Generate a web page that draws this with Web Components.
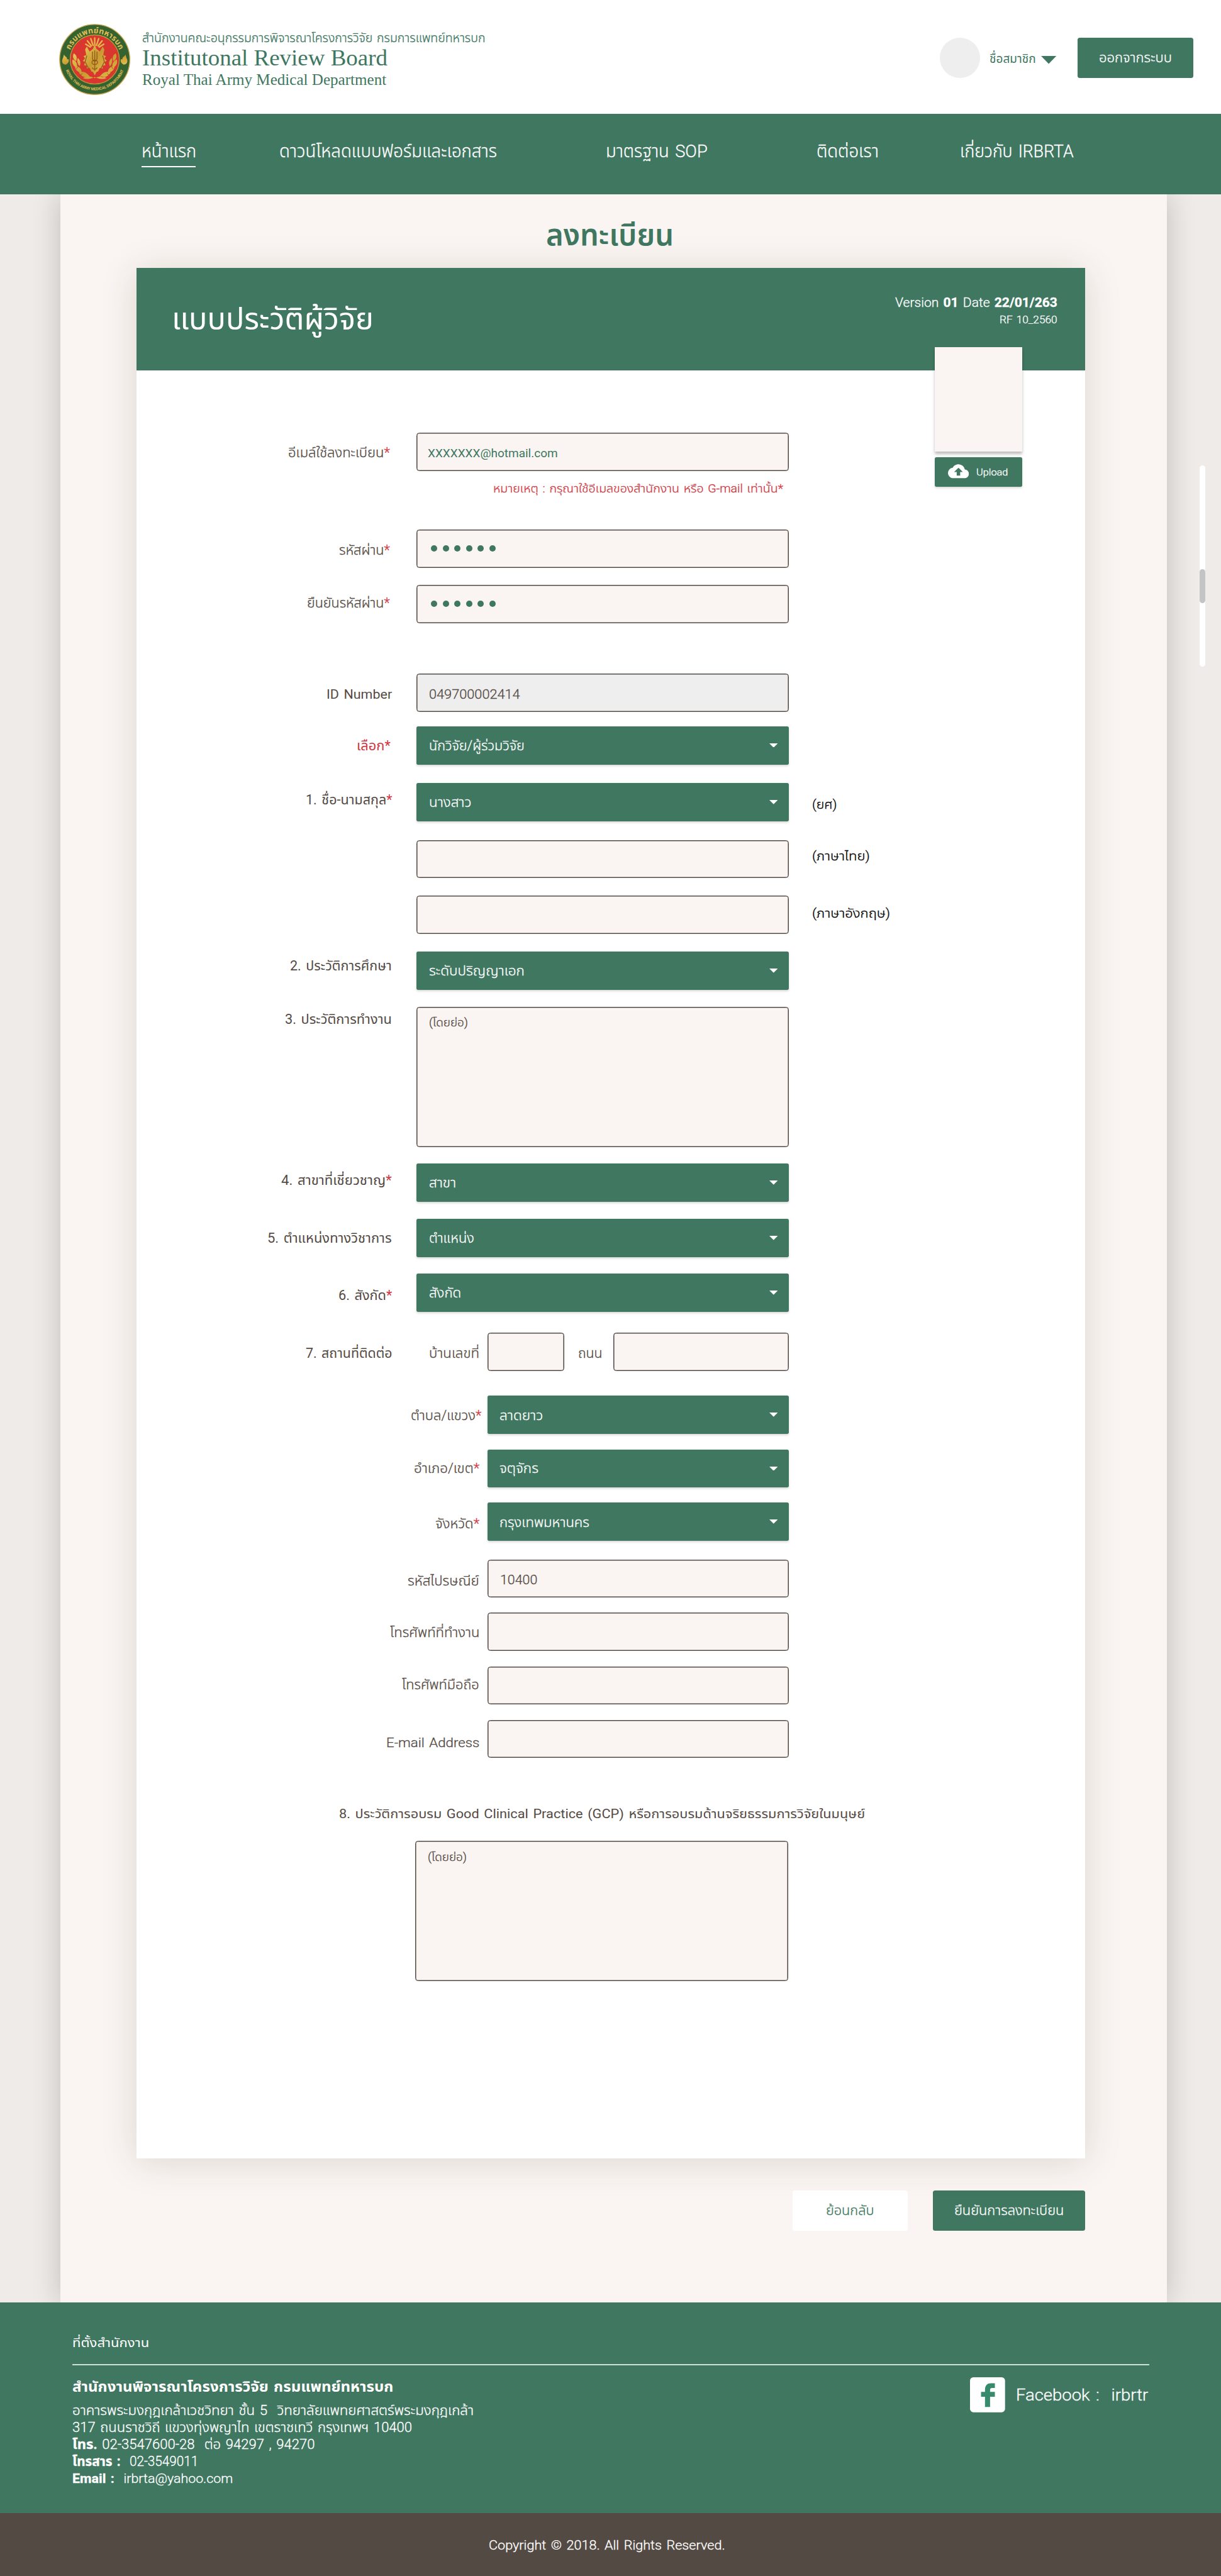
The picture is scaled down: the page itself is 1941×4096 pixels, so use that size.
<!DOCTYPE html>
<html lang="th">
<head>
<meta charset="utf-8">
<title>Institutonal Review Board</title>
<style>
html{overflow:hidden;background:#544a44;height:100%}
body{margin:0;font-family:Roboto,"Noto Sans Thai","Noto Sans",sans-serif;color:#544a44;height:4096px;width:1941px;overflow:hidden}
</style>
</head>
<body>
<irb-app></irb-app>
<script>
const BASE = `*{box-sizing:border-box}.red{color:#d23640}`;
const define = (name, css, html, after) => customElements.define(name, class extends HTMLElement {
  connectedCallback() {
    if (this.shadowRoot) return;
    const root = this.attachShadow({mode: 'open'});
    root.innerHTML = `<style>${BASE}${css}</style>${typeof html === 'function' ? html(this) : html}`;
    if (after) after(this, root);
  }
});

/* One line of text: its box ends on the baseline (b = box height), and it is fitted to w. */
define('fit-text', `
  :host{display:flex;align-items:flex-end;flex:none;white-space:pre}
  span{display:block;line-height:0;flex:none;transform-origin:0 50%}
  :host([wt="300"]) span{-webkit-text-stroke:.35px currentColor}`,
  '<span><slot></slot></span>',
  (el, root) => {
    const text = el.textContent, thai = /[\u0e00-\u0e7f]/.test(text) && !/[A-Za-z]/.test(text);
    const fs = (+el.getAttribute('fs') || 22.5) * (thai ? 1.05 : 1), w = +el.getAttribute('w');
    const span = root.querySelector('span');
    el.style.width = w + 'px';
    el.style.height = el.getAttribute('b') + 'px';
    span.style.fontSize = fs + 'px';
    span.style.marginBottom = fs * .3418 + 'px';
    if (!el.classList.contains('serif')) span.style.wordSpacing = '.1em';
    if (el.hasAttribute('wt')) span.style.fontWeight = el.getAttribute('wt');
    const ratio = el.getBoundingClientRect().width / span.getBoundingClientRect().width;
    span.style.transform = `scaleX(${ratio})`;
  });

define('irb-emblem', `:host{display:block;width:126px;height:126px}svg{display:block}`, `
<svg width="126" height="126" viewBox="0 0 126 126">
 <defs>
  <path id="top" d="M16.500 63a46.500 46.500 0 0 1 93 0"/>
  <path id="bot" d="M8.500 63a54.500 54.500 0 0 0 109 0"/>
  <linearGradient id="g" x1="0" y1="0" x2="1" y2="1"><stop offset="0" stop-color="#e9c85a"/><stop offset=".5" stop-color="#c99a30"/><stop offset="1" stop-color="#e2bd4e"/></linearGradient>
 </defs>
 <circle cx="63" cy="63" r="62" fill="#35632f" stroke="#c3a24a" stroke-width="1.600"/>
 <circle cx="63" cy="63" r="43.500" fill="#d93630" stroke="#b99a3c" stroke-width="1.500"/>
 <g fill="#e0bd55" font-family="Roboto,'Noto Sans Thai','Noto Sans',sans-serif" font-weight="700">
  <text font-size="14"><textPath href="#top" startOffset="50%" text-anchor="middle" textLength="112">กรมแพทย์ทหารบก</textPath></text>
  <text font-size="6.800"><textPath href="#bot" startOffset="50%" text-anchor="middle" textLength="132">ROYAL THAI ARMY MEDICAL DEPARTMENT</textPath></text>
 </g>
 <g fill="url(#g)">
  <g stroke="#e3b84a" stroke-width="2.600" stroke-linecap="round">
   <path d="M63 38V25M60 38l-4-12M66 38l4-12M57 39l-7-9M69 39l7-9M55 41l-8-5M71 41l8-5" fill="none"/>
  </g>
  <path d="M63 36l3 8 6 5 5-9 3 5-2 10 5 2-3 4 4 4-4 3 2 5-5 1 0 5-5-1-3 6-3 1-3 6-3-6-3-1-3-6-5 1 0-5-5-1 2-5-4-3 4-4-3-4 5-2-2-10 3-5 5 9 6-5z"/>
  <path d="M26 52c6 4 6 9 4 14-5-3-7-8-4-14zM100 52c-6 4-6 9-4 14 5-3 7-8 4-14zM24 63c7 3 9 9 7 15-6-3-9-9-7-15zM102 63c-7 3-9 9-7 15 6-3 9-9 7-15zM28 74c8 1 12 6 12 13-8-2-12-6-12-13zM98 74c-8 1-12 6-12 13 8-2 12-6 12-13zM35 86c8-3 14 0 19 7-7 3-14 1-19-7zM91 86c-8-3-14 0-19 7 7 3 14 1 19-7zM33 60c5 5 6 10 3 15-4-5-5-10-3-15zM93 60c-5 5-6 10-3 15 4-5 5-10 3-15zM42 96c8-5 14-3 21 0 7-3 13-5 21 0-8 3-14 1-21-2-7 3-13 5-21 2z"/>
  <path d="M9 54c0 4 6 4 5 9 4-3 5 6-2 9-6 0-8-5-6-10 2-3 1-5 3-8zM117 54c0 4-6 4-5 9-4-3-5 6 2 9 6 0 8-5 6-10-2-3-1-5-3-8z"/>
 </g>
 <path d="M59 49v12a4 5 0 0 0 8 0V49M63 47v36M58 68a5 4 0 1 0 10 0 5 4 0 1 0-10 0M59 77a4 3 0 1 0 8 0M49 56l-3 11 6 12M77 56l3 11-6 12" fill="none" stroke="#8f5b1c" stroke-width="1.500"/>
 <path d="M36 92l5-4M30 80l5-6M90 92l-5-4M96 80l-5-6" stroke="#8f5b1c" stroke-width="1"/>
</svg>`);

define('irb-button', `
  :host{display:flex;justify-content:center;align-items:flex-start;flex:none;background:#407761;color:#fff;border-radius:4px;height:71px}
  :host([light]){background:#fff;color:#407761}`, '<slot></slot>');

define('irb-header', `
  :host{display:flex;height:201px;background:#fff;color:#407761;padding-left:105px;align-items:flex-start}
  irb-emblem{margin-top:42px}
  .names{margin-left:21px;flex:1}
  .serif{font-family:"Liberation Serif",serif}
  .avatar{width:71px;height:71px;border-radius:50%;background:#eee;margin:67px 16px 0 0}
  svg{margin:99px 37px 0 10px}
  irb-button{width:205px;margin:67px 49px 0 0}`, `
  <irb-emblem></irb-emblem>
  <div class="names">
    <fit-text w="607" fs="21" b="75.500" wt="300">สำนักงานคณะอนุกรรมการพิจารณาโครงการวิจัย กรมการแพทย์ทหารบก</fit-text>
    <fit-text class="serif" w="434" fs="41" b="40.500">Institutonal Review Board</fit-text>
    <fit-text class="serif" w="432" fs="28" b="34.500">Royal Thai Army Medical Department</fit-text>
  </div>
  <div class="avatar"></div>
  <fit-text w="82" fs="21" b="112.500">ชื่อสมาชิก</fit-text>
  <svg width="27" height="14" viewBox="0 0 27 14"><path d="M0 0h27L13.500 14z" fill="#407761"/></svg>
  <irb-button><fit-text w="129" fs="23" b="44" wt="300">ออกจากระบบ</fit-text></irb-button>`);

define('irb-nav', `
  :host{display:flex;height:142.500px;background:#407761;color:#fff;padding-left:250px}
  a{display:block;margin-right:var(--gap)}
  .on::after{content:"";display:block;height:2.500px;background:#fff;margin-top:15px;width:96px}`, `
  <a class="on" style="--gap:147px"><fit-text w="97" fs="30" b="78" wt="300">หน้าแรก</fit-text></a>
  <a style="--gap:193px"><fit-text w="385" fs="30" b="78" wt="300">ดาวน์โหลดแบบฟอร์มและเอกสาร</fit-text></a>
  <a style="--gap:192px"><fit-text w="180" fs="31" b="78" wt="300">มาตรฐาน SOP</fit-text></a>
  <a style="--gap:144px"><fit-text w="110" fs="30" b="78" wt="300">ติดต่อเรา</fit-text></a>
  <a style="--gap:0px"><fit-text w="201" fs="31" b="78" wt="300">เกี่ยวกับ IRBRTA</fit-text></a>`);

define('irb-input', `
  :host{display:flex;align-items:flex-start;flex:none;height:67.600px;width:659px;background:#faf5f2;border:1.500px solid #544a44;box-shadow:inset 0 0 0 .6px #544a44;border-radius:5px;padding-left:21px}
  :host([off]){background:#eee}`, '<slot></slot>');

define('irb-dots', `:host{display:flex;gap:9.600px;padding:27px 0 0 4px}i{width:11px;height:11px;border-radius:50%;background:#407761}`, '<i></i>'.repeat(6));

define('irb-select', `
  :host{display:flex;align-items:flex-start;justify-content:space-between;flex:none;height:67.600px;width:659px;background:#407761;color:#fff;border-radius:3px;padding:0 20px 0 22px;box-shadow:0 2px 4px rgba(0,0,0,.16)}
  svg{margin-top:30px}`, `<slot></slot><svg width="15" height="7.500" viewBox="0 0 15 7.500"><path d="M0 0h15L7.500 7.500z" fill="#fff"/></svg>`);

/* A form line: label right-aligned in its column, the control, and an optional remark. */
define('irb-row', `
  :host{display:grid;grid-template-columns:var(--lab,453px) auto auto;justify-content:start;align-items:start}
  .label{display:flex;justify-content:flex-end;height:0}
  .control{display:flex;align-items:flex-start;margin-left:var(--shift,43px)}`, `
  <div class="label"><slot name="label"></slot></div><div class="control"><slot></slot></div><slot name="remark"></slot>`);

const FORM = [
 {y:766.3, l:'อีเมล์ใช้ลงทะเบียน*', lw:180, lx:690.5, lb:809, lt:300, t:'in', v:'XXXXXXX@hotmail.com', vw:230, vb:809, fs:20, green:1},
 {y:937.3, l:'รหัสผ่าน*', lw:90, lx:690.5, lb:981.5, lt:300, t:'dots'},
 {y:1035, l:'ยืนยันรหัสผ่าน*', lw:146.5, lx:690.5, lb:1075.7, lt:300, t:'dots'},
 {y:1192, l:'ID Number', lw:116, lb:1236.3, t:'in', off:1, v:'049700002414', vw:161, vb:1236.3, vt:300},
 {y:1285.3, l:'เลือก*', lw:60, lx:691, lb:1328, allred:1, t:'sel', v:'นักวิจัย/ผู้ร่วมวิจัย', vw:169, vb:1328},
 {y:1386, l:'1. ชื่อ-นามสกุล*', lw:153, lb:1424, t:'sel', v:'นางสาว', vw:75, vb:1428, r:'(ยศ)', rw:44, rb:1432},
 {y:1486.5, t:'in', r:'(ภาษาไทย)', rw:102, rb:1524},
 {y:1585.3, t:'in', r:'(ภาษาอังกฤษ)', rw:138, rb:1625},
 {y:1684, l:'2. ประวัติการศึกษา', lw:180, lb:1718, t:'sel', v:'ระดับปริญญาเอก', vw:169, vb:1727},
 {y:1782, h:248.6, l:'3. ประวัติการทำงาน', lw:189, lb:1811.8, t:'in', v:'(โดยย่อ)', vw:69, vb:1816.5, fs:19, vt:300},
 {y:2059, l:'4. สาขาที่เชี่ยวชาญ*', lw:195.5, lb:2097.5, t:'sel', v:'สาขา', vw:48, vb:2102},
 {y:2157, l:'5. ตำแหน่งทางวิชาการ', lw:220, lb:2199.6, t:'sel', v:'ตำแหน่ง', vw:80, vb:2199.6},
 {y:2254.3, l:'6. สังกัด*', lw:95, lb:2301, t:'sel', v:'สังกัด', vw:57, vb:2296.7},
 {y:2358.3, l:'7. สถานที่ติดต่อ', lw:153, lb:2403, t:'addr'},
 {y:2470.3, sub:1, l:'ตำบล/แขวง*', lw:125, lx:852, lb:2513.7, t:'sel', v:'ลาดยาว', vw:77, vb:2513.7},
 {y:2565, sub:1, l:'อำเภอ/เขต*', lw:116, lx:848.5, lb:2606.7, t:'sel', v:'จตุจักร', vw:69, vb:2606.7},
 {y:2659.3, sub:1, l:'จังหวัด*', lw:78, lx:848.5, lb:2704.7, t:'sel', v:'กรุงเทพมหานคร', vw:159, vb:2703},
 {y:2760, sub:1, l:'รหัสไปรษณีย์', lw:126.5, lx:848.5, lb:2806, t:'in', v:'10400', vw:66, vb:2803, vt:300},
 {y:2854.3, sub:1, l:'โทรศัพท์ที่ทำงาน', lw:158.5, lx:848.5, lb:2898, t:'in'},
 {y:2949, sub:1, l:'โทรศัพท์มือถือ', lw:136.5, lx:848.5, lb:2989.5, t:'in'},
 {y:3043.6, sub:1, l:'E-mail Address', lw:165, lx:848.5, lb:3092, t:'in'},
 {y:3258, h:248, t:'in', v:'(โดยย่อ)', vw:69, vb:3293, fs:19, vt:300, left:-1.5},
];
const star = (s, all) => all ? `<span class="red" style="color:#d23640">${s}</span>` : s.replace('*', '<span style="color:#d23640">*</span>');
function rowHTML(f, top) {
  const left = f.sub ? 863 : 737 + (f.left || 0), width = 1396 + (f.left || 0) - left;
  const lx = f.lx || 694, d = n => (n - f.y).toFixed(1);
  const val = f.v ? `<fit-text w="${f.vw}" fs="${f.fs || 22.5}" b="${d(f.vb) - (f.t === 'in' ? 1 : 0)}" wt="${f.vt || (f.green ? 400 : 300)}"${f.green ? ' style="color:#407761;margin-left:-2px"' : ''}>${f.v}</fit-text>` : '';
  const size = `width:${width}px;${f.h ? `height:${f.h}px;` : ''}`;
  let ctl;
  if (f.t === 'in') ctl = `<irb-input style="${size}"${f.off ? ' off' : ''}>${val}</irb-input>`;
  if (f.t === 'dots') ctl = `<irb-input style="${size}"><irb-dots></irb-dots></irb-input>`;
  if (f.t === 'sel') ctl = `<irb-select style="${size}${f.sub ? 'padding-left:21px' : ''}">${val}</irb-select>`;
  if (f.t === 'addr') ctl = `<fit-text style="margin:0 14px 0 23px" w="89" b="44.700" wt="300">บ้านเลขที่</fit-text><irb-input style="width:136px"></irb-input><fit-text style="margin:0 20px 0 24px" w="43" b="44.700" wt="300">ถนน</fit-text><irb-input style="width:310px"></irb-input>`;
  const lab = f.l ? `<fit-text slot="label" w="${f.lw}" b="${d(f.lb)}" wt="${f.lt || (f.sub ? 300 : 400)}">${star(f.l, f.allred)}</fit-text>` : '';
  const rem = f.r ? `<fit-text slot="remark" style="margin-left:41px;color:#000" w="${f.rw}" fs="21" b="${d(f.rb)}" wt="300">${f.r}</fit-text>` : '';
  return `<irb-row style="margin-top:${top.toFixed(1)}px;--lab:${lx - 241.5}px;--shift:${left - lx}px">${lab}${ctl}${rem}</irb-row>`;
}
define('irb-form', `
  :host{display:block}
  .note{margin-left:632px;color:#d23640}
  .gcp{margin-left:359px}`, () => {
  let end = 655.6, out = '';
  for (const f of FORM) {
    if (f.y === 937.3) { out += `<fit-text class="note" w="513" fs="20.500" b="${(872 - end).toFixed(1)}" wt="300">หมายเหตุ : กรุณาใช้อีเมลของสำนักงาน หรือ G-mail เท่านั้น*</fit-text>`; end = 872; }
    if (f.y === 3258) { out += `<fit-text class="gcp" w="930.500" b="${(3218 - end).toFixed(1)}">8. ประวัติการอบรม Good Clinical Practice (GCP) หรือการอบรมด้านจริยธรรมการวิจัยในมนุษย์</fit-text>`; end = 3218; }
    out += rowHTML(f, f.y - end);
    end = f.y + (f.h || 67.6);
  }
  return out;
});

define('irb-photo', `
  :host{display:block;position:absolute;right:111px;top:140px;width:154.500px}
  .pic{height:185px;background:#faf5f2;box-shadow:0 5px 5px rgba(0,0,0,.26)}
  .up{display:flex;align-items:flex-start;height:51.500px;margin-top:10px;background:#407761;color:#fff;border-radius:3px;padding-left:23px;box-shadow:0 2px 4px rgba(0,0,0,.16)}
  svg{margin:12px 13px 0 0}`, `
  <div class="pic"></div>
  <div class="up"><svg width="37" height="25" viewBox="0 0 24 16"><path fill="#fff" d="M19.350 6.040A7.490 7.490 0 0 0 12 0C9.110 0 6.600 1.640 5.350 4.040A5.994 5.994 0 0 0 0 10c0 3.310 2.690 6 6 6h13c2.760 0 5-2.240 5-5 0-2.640-2.050-4.780-4.650-4.960zM14 9v4h-4V9H7l5-5 5 5h-3z"/></svg>
  <fit-text w="56" fs="17" b="32" wt="300">Upload</fit-text></div>`);

define('irb-card', `
  :host{display:block;position:relative;width:1678.500px;height:3344.500px;margin:39.500px 0 0 134.500px;background:#fff;box-shadow:0 6px 60px rgba(60,45,40,.15)}
  header{display:flex;justify-content:space-between;height:181px;background:#407761;color:#fff;padding:0 49px 0 63px}
  .ver{display:flex;flex-direction:column;align-items:flex-end}
  b{font-weight:700}`, `
  <header><fit-text w="357" fs="51" b="109">แบบประวัติผู้วิจัย</fit-text>
  <div class="ver"><fit-text w="287" fs="23" b="68.500" wt="300">Version <b>01</b> Date <b>22/01/263</b></fit-text><fit-text w="102" fs="18" b="30" wt="300">RF 10_2560</fit-text></div></header>
  <irb-form></irb-form>
  <irb-photo></irb-photo>`);

define('irb-scroll', `
  :host{display:block;width:9.500px;height:357px;border-radius:5px;background:#fff;padding-top:184px;margin:479.500px 0 0 58.500px}
  i{display:block;height:60px;border-radius:5px;background:#c4c4c4}`, '<i></i>');

define('irb-main', `
  :host{display:flex;align-items:flex-start;height:3730.500px;overflow:hidden;background:#efebe8;padding-left:106.500px}
  .panel{width:1957.500px;height:100%;flex:none;background:#faf5f2;box-shadow:0 0 48px rgba(0,0,0,.2)}
  .title{margin-left:859px;color:#407761}
  .actions{display:flex;justify-content:flex-end;gap:44px;padding:57px 144px 0 0}`, `
  <div class="panel">
    <fit-text class="title" w="226" fs="51" b="91.500" wt="600">ลงทะเบียน</fit-text>
    <irb-card></irb-card>
    <div class="actions">
      <irb-button light style="width:204px"><fit-text w="85" b="43.500" wt="300">ย้อนกลับ</fit-text></irb-button>
      <irb-button style="width:270px"><fit-text w="194" b="43.500" wt="300">ยืนยันการลงทะเบียน</fit-text></irb-button>
    </div>
  </div>
  <irb-scroll></irb-scroll>`);

define('irb-footer', `
  :host{display:block;color:#fff}
  .top{height:373px;background:#407761;padding:0 127px 0 127.500px}
  hr{border:0;height:2px;background:#cfe0d8;margin:29.500px 0 0}
  .cols{display:flex;justify-content:space-between;align-items:flex-start}
  .fb{display:flex;align-items:flex-start;margin-right:2px}
  svg{margin:21px 19px 0 0}
  b{font-weight:700}
  .bar{height:110px;background:#544a44;padding-left:865px}`, `
  <div class="top">
    <fit-text w="136" fs="21" b="80">ที่ตั้งสำนักงาน</fit-text>
    <hr>
    <div class="cols">
      <div>
        <fit-text w="568" fs="24" b="47.500" wt="700">สำนักงานพิจารณาโครงการวิจัย กรมแพทย์ทหารบก</fit-text>
        <fit-text w="710" b="40.500" wt="300">อาคารพระมงกุฎเกล้าเวชวิทยา ชั้น 5  วิทยาลัยแพทยศาสตร์พระมงกุฎเกล้า</fit-text>
        <fit-text w="601" b="30.200" wt="300">317 ถนนราชวิถี แขวงทุ่งพญาไท เขตราชเทวี กรุงเทพฯ 10400</fit-text>
        <fit-text w="429" b="30" wt="300"><b>โทร.</b> 02-3547600-28  ต่อ 94297 , 94270</fit-text>
        <fit-text w="223" b="30" wt="300"><b>โทรสาร :</b>  02-3549011</fit-text>
        <fit-text w="284" b="30" wt="300"><b>Email :</b>  irbrta@yahoo.com</fit-text>
      </div>
      <div class="fb">
        <svg width="62" height="62" viewBox="0 0 62 62"><rect width="62" height="62" rx="6" fill="#fff"/><path d="M26.500 52.500V34.500H19.500V26H26.500V22C26.500 14 31 10.500 37 10.500H44V19H39.500C36.500 19 35.500 20 35.500 22.500V26H44V34.500H35.500V52.500z" fill="#388a6c"/></svg>
        <fit-text w="234" fs="28" b="62.500" wt="300">Facebook :  irbrtr</fit-text>
      </div>
    </div>
  </div>
  <div class="bar"><fit-text w="418" fs="23" b="65" wt="300">Copyright © 2018. All Rights Reserved.</fit-text></div>`);

define('irb-app', `:host{display:block;zoom:.8986;width:2160px;overflow:hidden}`,
  '<irb-header></irb-header><irb-nav></irb-nav><irb-main></irb-main><irb-footer></irb-footer>');
</script>
</body>
</html>
